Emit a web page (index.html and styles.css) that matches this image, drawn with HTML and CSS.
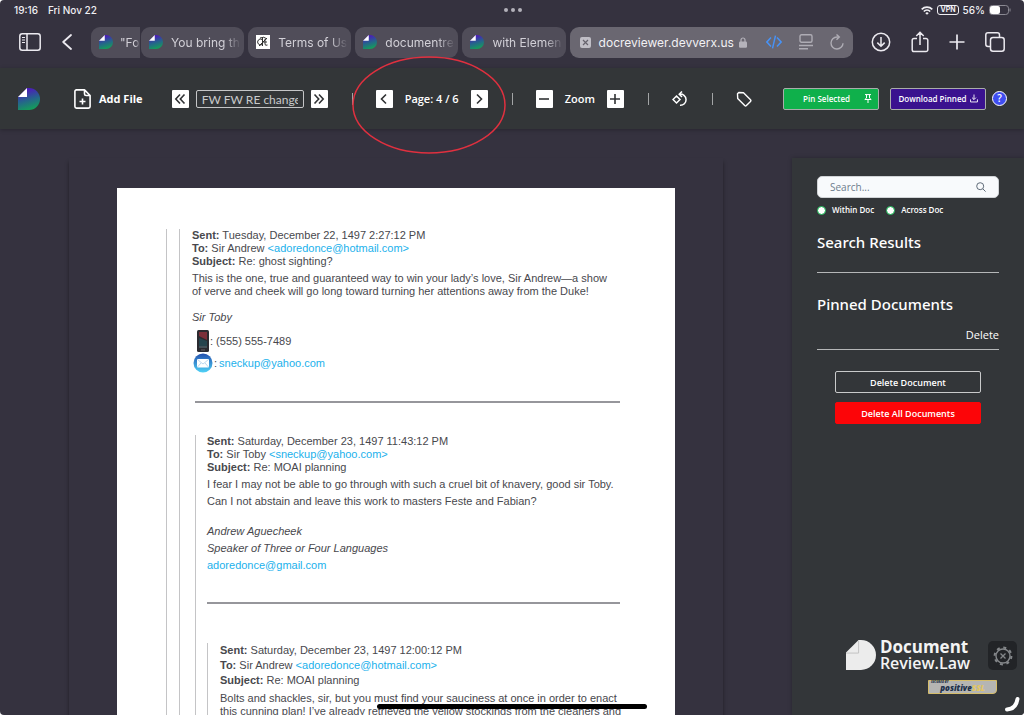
FILE: index.html
```html
<!DOCTYPE html>
<html lang="en">
<head>
    <meta charset="UTF-8">
    <meta name="viewport" content="width=device-width, initial-scale=1.0">
    <title>Document Review</title>
    <link rel="stylesheet" href="styles.css">
</head>
<body>
    <!-- Shared shapes -->
    <svg class="defs" width="0" height="0" aria-hidden="true">
        <defs>
            <linearGradient id="leaf" x1="0.35" y1="0" x2="0.65" y2="1">
                <stop offset="0.1" stop-color="#4a1fb8"/>
                <stop offset="0.5" stop-color="#27608f"/>
                <stop offset="1" stop-color="#12a355"/>
            </linearGradient>
            <linearGradient id="mailblue" x1="0" y1="0" x2="0" y2="1">
                <stop offset="0" stop-color="#2450ae"/>
                <stop offset="1" stop-color="#4fd2f7"/>
            </linearGradient>
            <symbol id="logo" viewBox="0 0 22 22">
                <path d="M9 0h2a11 11 0 0 1 0 22H0V9z" fill="url(#leaf)"/>
                <path d="M9 0v9H0z" fill="#fff"/>
            </symbol>
        </defs>
    </svg>

    <div class="status-bar">
        <div class="status-left"><span>19:16</span><span>Fri Nov 22</span></div>
        <div class="dots"><i></i><i></i><i></i></div>
        <div class="status-right">
            <svg width="12" height="9" viewBox="0 0 12 9" fill="none" stroke="#f0eff3" stroke-width="1.7"><path d="M.7 3.3a7.6 7.6 0 0 1 10.6 0M2.8 5.5a4.6 4.6 0 0 1 6.4 0"/><path d="M6 8.8 4.3 7.2a2.4 2.4 0 0 1 3.4 0z" fill="#f0eff3" stroke="none"/></svg>
            <span class="vpn">VPN</span>
            <span>56%</span>
            <svg width="22" height="10" viewBox="0 0 22 10"><rect x=".5" y=".5" width="19" height="9" rx="2.8" fill="none" stroke="#8b8993"/><rect x="1" y="1" width="10" height="8" rx="2" fill="#fff"/><path d="M21 3.5v3" stroke="#8b8993"/></svg>
        </div>
    </div>

    <div class="browser-bar">
        <div class="browser-nav">
            <button class="icon-btn" aria-label="Sidebar"><svg width="22" height="18" viewBox="0 0 22 18" fill="none" stroke="#eceaf0" stroke-width="1.5"><rect x=".8" y=".8" width="20.4" height="16.4" rx="2.5"/><path d="M8 1v16"/><path d="M3 4.5h3M3 7h3M3 9.5h3" stroke-width="1"/></svg></button>
            <button class="icon-btn" aria-label="Back"><svg width="10" height="16" viewBox="0 0 10 16" fill="none" stroke="#eceaf0" stroke-width="1.8" stroke-linecap="round" stroke-linejoin="round"><path d="M9 1 1.2 8 9 15"/></svg></button>
        </div>
        <div class="tabs">
            <a href="#" class="tab tab-under"><svg class="favicon"><use href="#logo"/></svg><span>"Fo</span></a>
            <a href="#" class="tab"><svg class="favicon"><use href="#logo"/></svg><span>You bring th</span></a>
            <a href="#" class="tab"><svg class="favicon" viewBox="0 0 14 14"><path fill="#fff" d="M0 0h14v14H0z"/><path d="M6 4.5a2.8 3 0 1 0 0 5M6.5 3v8M6 7h5M9 4v5q0 2 2.5 1M3 11l8-8M4 3q4-2 7 1" fill="none" stroke="#333" stroke-width="1"/></svg><span>Terms of Us</span></a>
            <a href="#" class="tab"><svg class="favicon"><use href="#logo"/></svg><span>documentre</span></a>
            <a href="#" class="tab"><svg class="favicon"><use href="#logo"/></svg><span>with Elemen</span></a>
            <div class="tab active">
                <svg width="11" height="11" viewBox="0 0 11 11"><rect width="11" height="11" rx="2" fill="#c0bec6"/><path d="M3 3l5 5M8 3 3 8" stroke="#66636d" stroke-width="1.2"/></svg>
                <a href="#" class="address">docreviewer.devverx.us</a>
                <svg width="8" height="11" viewBox="0 0 8 11"><rect y="4.5" width="8" height="6.2" rx="1.2" fill="#b5b3bb"/><path d="M2 5V3a2 2 0 0 1 4 0v2" fill="none" stroke="#b5b3bb" stroke-width="1.2"/></svg>
                <div class="tab-tools">
                    <svg width="16" height="14" viewBox="0 0 16 14" fill="none" stroke="#4792f5" stroke-width="1.5"><path d="M5 2.5.9 7 5 11.5M11 2.5 15.1 7 11 11.5M9.5.6l-3 12.8"/></svg>
                    <svg width="14" height="16" viewBox="0 0 14 16" fill="none" stroke="#aeacb4" stroke-width="1.4"><rect x="1" y=".8" width="12" height="7.5" rx="1.5"/><path d="M0 11.5h14M0 14.8h9"/></svg>
                    <svg width="14" height="16" viewBox="0 0 14 16" fill="none" stroke="#aeacb4" stroke-width="1.4"><path d="M13 9.2a6 6 0 1 1-6-6.2h2"/><path d="M6.5.5 9.3 3 6.5 5.8"/></svg>
                </div>
            </div>
        </div>
        <div class="browser-actions">
            <button class="icon-btn" aria-label="Downloads"><svg width="20" height="20" viewBox="0 0 20 20" fill="none" stroke="#eceaf0" stroke-width="1.5"><circle cx="10" cy="10" r="8.7"/><path d="M10 5v9M6.3 10.6 10 14.2l3.7-3.6"/></svg></button>
            <button class="icon-btn" aria-label="Share"><svg width="18" height="22" viewBox="0 0 18 22" fill="none" stroke="#eceaf0" stroke-width="1.5"><path d="M6 7.5H3A1.8 1.8 0 0 0 1.2 9.3v9.4A1.8 1.8 0 0 0 3 20.5h12a1.8 1.8 0 0 0 1.8-1.8V9.3A1.8 1.8 0 0 0 15 7.5h-3M9 14V1.8M5.3 5 9 1.3 12.7 5"/></svg></button>
            <button class="icon-btn" aria-label="New tab"><svg width="16" height="16" viewBox="0 0 16 16" stroke="#eceaf0" stroke-width="1.7"><path d="M8 .5v15M.5 8h15"/></svg></button>
            <button class="icon-btn" aria-label="All tabs"><svg width="20" height="20" viewBox="0 0 20 20" fill="none" stroke="#eceaf0" stroke-width="1.5"><rect x="5.5" y="5.5" width="13.7" height="13.7" rx="2.5"/><path d="M5 14.5H3A2.2 2.2 0 0 1 .8 12.3V3A2.2 2.2 0 0 1 3 .8h9.3A2.2 2.2 0 0 1 14.5 3v2"/></svg></button>
        </div>
    </div>

    <header class="toolbar">
        <a href="#" class="brand" aria-label="Home"><svg width="22" height="22"><use href="#logo"/></svg></a>
        <button class="add-file">
            <svg width="17" height="20" viewBox="0 0 17 20" fill="none" stroke="#fff" stroke-width="1.6" stroke-linejoin="round"><path d="M10.5.9H2.5A1.6 1.6 0 0 0 .9 2.5v15a1.6 1.6 0 0 0 1.6 1.6h12a1.6 1.6 0 0 0 1.6-1.6V6.5zM10.5.9v4q0 1.6 1.6 1.6h4M8.5 9.5v6M5.5 12.5h6"/></svg>
            Add File
        </button>
        <div class="group doc-nav">
            <button class="square" aria-label="Previous document"><svg width="14" height="14" viewBox="0 0 14 14"><path d="M7 2.5 2.8 7 7 11.5M11.5 2.5 7.3 7l4.2 4.5"/></svg></button>
            <input class="doc-name" type="text" value="FW FW RE change" aria-label="Document name">
            <button class="square" aria-label="Next document"><svg width="14" height="14" viewBox="0 0 14 14"><path d="M2.5 2.5 6.7 7l-4.2 4.5M7 2.5 11.2 7 7 11.5"/></svg></button>
        </div>
        <span class="divider"></span>
        <div class="group page-nav">
            <button class="square" aria-label="Previous page"><svg width="14" height="14" viewBox="0 0 14 14"><path d="M9 2.5 4.5 7 9 11.5"/></svg></button>
            <span>Page: 4 / 6</span>
            <button class="square" aria-label="Next page"><svg width="14" height="14" viewBox="0 0 14 14"><path d="M5 2.5 9.5 7 5 11.5"/></svg></button>
            <svg class="marker" width="154" height="98" viewBox="0 0 154 98"><ellipse cx="77" cy="49" rx="76" ry="48" fill="none" stroke="#e0303f" stroke-width="1.5"/></svg>
        </div>
        <span class="divider"></span>
        <div class="group zoom-nav">
            <button class="square" aria-label="Zoom out"><svg width="14" height="14" viewBox="0 0 14 14"><path d="M2 7h10"/></svg></button>
            <span>Zoom</span>
            <button class="square" aria-label="Zoom in"><svg width="14" height="14" viewBox="0 0 14 14"><path d="M2 7h10M7 2v10"/></svg></button>
        </div>
        <span class="divider"></span>
        <button class="icon-btn" aria-label="Rotate"><svg width="16" height="16" viewBox="0 0 16 16" fill="none" stroke="#fff" stroke-width="1.5"><path d="M4.5 5 8 8.5 4.5 12 1 8.5zM7.5 3.2A5.6 5.6 0 1 1 8 14.3M10 .5 7.2 3.2 10 6"/></svg></button>
        <span class="divider"></span>
        <button class="icon-btn" aria-label="Tag"><svg width="16" height="16" viewBox="0 0 16 16" fill="none" stroke="#fff" stroke-width="1.4" stroke-linejoin="round"><path d="M1.5 2.8 2.8 1.5 7.5 1.7 14.5 8.7Q15.3 9.6 14.5 10.4L10.4 14.5Q9.6 15.3 8.7 14.5L1.7 7.5z"/></svg></button>
        <div class="toolbar-actions">
            <button class="action pin">Pin Selected<svg width="8" height="9" viewBox="0 0 8 9" fill="none" stroke="#fff"><path d="M1 .6h6M2.5.6v3.5L.8 5.5h6.4L5.5 4.1V.6M4 5.5V9"/></svg></button>
            <button class="action download">Download Pinned<svg width="8" height="9" viewBox="0 0 9 9" fill="none" stroke="#fff"><path d="M4.5 0v5.5M2.3 3.5l2.2 2.2 2.2-2.2M.6 5.5v2.9h7.8V5.5"/></svg></button>
            <button class="help" aria-label="Help">?</button>
        </div>
    </header>

    <main class="workspace">
        <section class="viewer">
            <article class="page">
                <div class="thread"><div class="thread">
                    <div class="mail">
                        <p class="head"><b>Sent:</b> Tuesday, December 22, 1497 2:27:12 PM<br>
                        <b>To:</b> Sir Andrew <a href="#">&lt;adoredonce@hotmail.com&gt;</a><br>
                        <b>Subject:</b> Re: ghost sighting?</p>
                        <p class="text">This is the one, true and guaranteed way to win your lady’s love, Sir Andrew—a show<br>
                        of verve and cheek will go long toward turning her attentions away from the Duke!</p>
                        <p class="signature"><i>Sir Toby</i></p>
                        <p class="contact"><svg class="phone" width="12" height="22" viewBox="0 0 12 22"><rect width="12" height="22" rx="1.5" fill="#2b2a30"/><path d="M2 2h8v8L2 6z" fill="#7c2f3a"/><path d="M2 8l8 3v7H2z" fill="#25444e"/><path d="M2 17h8M4 20h4" stroke="#655e65"/></svg>: (555) 555-7489</p>
                        <p class="contact"><svg width="20" height="20" viewBox="0 0 20 20"><circle cx="10" cy="10" r="9.5" fill="url(#mailblue)"/><rect x="4" y="6" width="12" height="8.5" rx="1" fill="#fff"/><path d="M4.5 6.5 10 11l5.5-4.5M4.5 14 8 10M15.5 14 12 10" fill="none" stroke="#a9cdea" stroke-width=".8"/></svg>: <a href="#">sneckup@yahoo.com</a></p>
                    </div>
                    <hr>
                    <div class="thread reply">
                        <div class="mail">
                            <p class="head"><b>Sent:</b> Saturday, December 23, 1497 11:43:12 PM<br>
                            <b>To:</b> Sir Toby <a href="#">&lt;sneckup@yahoo.com&gt;</a><br>
                            <b>Subject:</b> Re: MOAI planning</p>
                            <p class="loose">I fear I may not be able to go through with such a cruel bit of knavery, good sir Toby.<br>
                            Can I not abstain and leave this work to masters Feste and Fabian?</p>
                            <p class="loose signature"><i>Andrew Aguecheek<br>Speaker of Three or Four Languages</i><br>
                            <a href="#">adoredonce@gmail.com</a></p>
                        </div>
                        <hr class="flush">
                        <div class="thread">
                            <p class="head spaced"><b>Sent:</b> Saturday, December 23, 1497 12:00:12 PM<br>
                            <b>To:</b> Sir Andrew <a href="#">&lt;adoredonce@hotmail.com&gt;</a><br>
                            <b>Subject:</b> Re: MOAI planning</p>
                            <p class="text">Bolts and shackles, sir, but you must find your sauciness at once in order to enact<br>
                            this cunning plan! I’ve already retrieved the yellow stockings from the cleaners and</p>
                        </div>
                    </div>
                </div></div>
            </article>
        </section>

        <aside class="sidebar">
            <div class="search">
                <input type="text" placeholder="Search..." aria-label="Search">
                <svg width="10" height="10" viewBox="0 0 10 10" fill="none" stroke="#5f6b78"><circle cx="4.2" cy="4.2" r="3.5"/><path d="M6.8 6.8 9.6 9.6"/></svg>
            </div>
            <div class="scope">
                <label><input type="radio" name="scope">Within Doc</label>
                <label><input type="radio" name="scope">Across Doc</label>
            </div>
            <h2 class="results-title">Search Results</h2>
            <h2 class="pinned-title">Pinned Documents</h2>
            <div class="pinned-head"><a href="#">Delete</a></div>
            <div class="delete-buttons">
                <button>Delete Document</button>
                <button class="danger">Delete All Documents</button>
            </div>
            <footer>
                <div class="footer-logo">
                    <svg width="30" height="30" viewBox="0 0 31 31"><path d="M13 0h2.5a15.5 15.5 0 0 1 0 31H0V13z" fill="#ececec"/><path d="M13 1v12.5H0" fill="none" stroke="#c2c2c2"/></svg>
                    <div class="wordmark"><strong>Document</strong><span>Review.Law</span></div>
                </div>
                <div class="ssl"><small>SECURED BY</small><span>positive<em>SSL</em></span></div>
            </footer>
            <button class="settings" aria-label="Settings"><svg width="20" height="20" viewBox="0 0 20 20" fill="none" stroke="#84878a"><circle cx="10" cy="10" r="7" stroke-width="1.4"/><circle cx="10" cy="10" r="8.4" stroke-width="2" stroke-dasharray="3 3.6"/><path d="M7.5 7.5l5 5M12.5 7.5l-5 5" stroke-width="1.3"/></svg></button>
        </aside>
    </main>

    <div class="home-indicator"></div>
    <svg class="corner" width="17" height="17" viewBox="0 0 17 17"><path d="M3 13.5Q12 13 13.5 3" fill="none" stroke="#fff" stroke-width="4" stroke-linecap="round"/></svg>
</body>
</html>
```
FILE: styles.css
```css
* {
    box-sizing: border-box;
}

html {
    background: #fff;
}

body {
    margin: 0;
    height: 100vh;
    display: flex;
    flex-direction: column;
    overflow: hidden;
    position: relative;
    background: #35323f;
    border-radius: 4px;
    color: #fff;
    font-family: "Open Sans", sans-serif;
    font-size: 11px;
}

button {
    font: inherit;
    color: inherit;
    padding: 0;
    border: 0;
    background: none;
    cursor: pointer;
}

a {
    color: inherit;
    text-decoration: none;
}

svg {
    display: block;
    flex: none;
}

.defs {
    position: absolute;
}

.icon-btn {
    display: flex;
    align-items: center;
    justify-content: center;
}

/* Device status */
.status-bar {
    display: grid;
    grid-template-columns: 1fr auto 1fr;
    align-items: center;
    height: 20px;
    padding: 0 13px 0 14px;
    font-family: Inter, sans-serif;
    font-size: 10px;
    font-weight: 500;
    color: #f0eff3;
}

.status-left {
    display: flex;
    gap: 10px;
}

.status-right {
    display: flex;
    justify-content: flex-end;
    align-items: center;
    gap: 4px;
}

.dots {
    display: flex;
    gap: 3px;
}

.dots i {
    width: 4px;
    height: 4px;
    border-radius: 50%;
    background: #b3b1ba;
}

.vpn {
    border: 1px solid #f0eff3;
    border-radius: 3px;
    padding: 0 2px;
    font-size: 7px;
    line-height: 8px;
    font-weight: 700;
}

/* Browser chrome */
.browser-bar {
    display: flex;
    align-items: center;
    height: 48px;
    padding: 0 19px 4px;
    font-family: Inter, sans-serif;
    font-size: 12px;
}

.browser-nav {
    display: flex;
    align-items: center;
    gap: 21px;
    width: 72px;
}

.tabs {
    flex: 1;
    display: grid;
    grid-template-columns: 46fr 103fr 103fr 103fr 103fr 283fr;
    gap: 4px;
}

.tab {
    display: flex;
    align-items: center;
    gap: 8px;
    min-width: 0;
    height: 31px;
    padding: 0 3px 0 8px;
    border-radius: 9px;
    background: #504d59;
    color: #d2d0d7;
    overflow: hidden;
    white-space: nowrap;
}

.tab > span {
    flex: 1;
    overflow: hidden;
    mask-image: linear-gradient(to right, #000 75%, transparent);
}

.tab-under {
    gap: 7px;
    padding-right: 0;
    margin-right: -3px;
    border-radius: 9px 0 0 9px;
}

.tab.active {
    background: #6a6771;
    color: #f2f1f4;
    padding: 0 9px 0 10px;
}

.favicon {
    width: 14px;
    height: 14px;
}

.active > a + svg {
    margin-left: -3px;
}

.tab-tools {
    display: flex;
    align-items: center;
    gap: 17px;
    margin-left: auto;
}

.browser-actions {
    display: flex;
    align-items: center;
    justify-content: space-between;
    width: 134px;
    margin-left: 18px;
}

/* Application toolbar */
.toolbar {
    display: flex;
    align-items: center;
    height: 61px;
    flex: none;
    padding: 0 17px 0 18px;
    background: #333638;
    box-shadow: 0 1px 4px rgba(0, 0, 0, 0.25);
    font-weight: 600;
    position: relative;
    z-index: 1;
}

.add-file {
    display: flex;
    align-items: center;
    gap: 8px;
    margin-left: 34px;
    font-weight: 700;
    white-space: nowrap;
}

.group {
    display: flex;
    align-items: center;
    gap: 12px;
    position: relative;
    white-space: nowrap;
}

.doc-nav {
    gap: 7px;
    margin-left: 29px;
}

.square {
    display: flex;
    align-items: center;
    justify-content: center;
    width: 17px;
    height: 18px;
    border-radius: 1px;
    background: #fff;
}

.square svg {
    fill: none;
    stroke: #303234;
    stroke-width: 1.6;
}

.doc-name {
    width: 108px;
    height: 18px;
    padding: 2px 5px 0;
    border: 1px solid #c5c6c7;
    border-radius: 2px;
    background: transparent;
    color: #c9cacb;
    font-family: Lato, sans-serif;
    font-size: 12px;
}

.divider {
    width: 1px;
    height: 12px;
    margin: 0 23px 0 24px;
    background: #a3a5a6;
}

.marker {
    position: absolute;
    top: -34px;
    left: -24px;
    pointer-events: none;
}

.toolbar-actions {
    display: flex;
    align-items: center;
    margin-left: auto;
}

.action {
    display: flex;
    align-items: center;
    justify-content: center;
    width: 96px;
    height: 22px;
    margin-right: 11px;
    border: 1px solid #a9adaa;
    border-radius: 2px;
    font-size: 8px;
    white-space: nowrap;
}

.pin {
    gap: 14px;
    justify-content: flex-end;
    padding-right: 6px;
    background: #0fb04b;
}

.download {
    gap: 3px;
    margin-right: 6px;
    background: #3a128f;
}

.help {
    width: 15px;
    height: 15px;
    border: 1px solid #fff;
    border-radius: 50%;
    background: #3f4df0;
    font-size: 10px;
    line-height: 13px;
}

/* Document area */
.workspace {
    flex: 1;
    min-height: 0;
    display: grid;
    grid-template-columns: 654px 232px;
    justify-content: end;
    gap: 69px;
    padding-top: 29px;
}

.viewer {
    min-height: 0;
    overflow: hidden;
    padding: 30px 48px 0;
    box-shadow: 0 4px 4px rgba(0, 0, 0, 0.4);
}

.page {
    height: 100%;
    overflow: hidden;
    padding: 41px 49px 0;
    background: #fff;
    color: #48484d;
    font-family: "Liberation Sans", Arial, sans-serif;
    line-height: 13px;
    white-space: nowrap;
}

.page p {
    margin: 0;
}

.page a {
    color: #1bb1ec;
}

.thread {
    padding-left: 12px;
    border-left: 1px solid #c4c4c6;
    min-height: 600px;
}

.page .head {
    padding-bottom: 4px;
}

.page .reply > .mail .head {
    padding-bottom: 2px;
}

.page .spaced {
    line-height: 15px;
}

.page .signature {
    padding-top: 13px;
}

.page .loose {
    line-height: 17px;
}

.page .contact {
    display: flex;
    align-items: center;
    gap: 1px;
    height: 22px;
    padding-left: 1px;
}

.signature + .contact {
    margin-top: 6px;
}

.phone {
    margin-left: 4px;
}

.contact a {
    margin-left: 1px;
}

.page hr {
    width: 425px;
    height: 0;
    margin: 27px 0 32px 3px;
    border: 0;
    border-top: 2px solid #96969b;
}

.reply {
    margin-left: 3px;
    padding-left: 11px;
}

.page .flush {
    width: 413px;
    margin: 28px 0 39px;
}

/* Sidebar */
.sidebar {
    position: relative;
    display: flex;
    flex-direction: column;
    padding: 18px 25px 21px;
    background: #333639;
    box-shadow: 0 0 4px rgba(0, 0, 0, 0.25);
}

.search {
    display: flex;
    align-items: center;
    height: 22px;
    padding: 0 12px;
    border: 1px solid #d0d3d6;
    border-radius: 5px;
    background: #f8fafc;
}

.search input {
    flex: 1;
    min-width: 0;
    padding: 0;
    border: 0;
    outline: 0;
    background: none;
    font-family: inherit;
    font-size: 10px;
}

.search input::placeholder {
    color: #6d7c8d;
}

.scope {
    display: flex;
    gap: 12px;
    margin-top: 6px;
    font-size: 8px;
    line-height: 12px;
    font-weight: 600;
}

.scope label {
    display: flex;
    align-items: center;
    gap: 6px;
}

.scope input {
    appearance: none;
    width: 9px;
    height: 9px;
    margin: 0;
    border: 1px solid #0fb04b;
    border-radius: 50%;
    background: #fff;
}

.sidebar h2 {
    margin: 0;
    font-family: "Noto Sans", sans-serif;
    font-size: 15px;
    line-height: 20px;
    font-weight: 500;
}

.sidebar .results-title {
    margin-top: 16px;
    padding-bottom: 20px;
    border-bottom: 1px solid #b5b7b8;
}

.sidebar .pinned-title {
    margin-top: 21px;
}

.pinned-head {
    padding: 13px 0 6px;
    border-bottom: 1px solid #b5b7b8;
    font-size: 11px;
    line-height: 16px;
    text-align: right;
}

.delete-buttons {
    display: flex;
    flex-direction: column;
    gap: 9px;
    padding: 21px 18px 0;
}

.delete-buttons button {
    height: 22px;
    border: 1px solid #c9cacb;
    border-radius: 2px;
    font-size: 9px;
    font-weight: 600;
}

.delete-buttons .danger {
    border-color: #fc0508;
    background: #fc0508;
}

footer {
    display: flex;
    flex-direction: column;
    align-items: flex-end;
    gap: 8px;
    margin-top: auto;
    padding-right: 2px;
}

.footer-logo {
    display: flex;
    align-items: center;
    gap: 4px;
    margin-right: 27px;
    color: #f4f4f4;
}

.wordmark {
    display: flex;
    flex-direction: column;
    font-size: 16px;
    line-height: 17px;
}

.wordmark strong {
    font-size: 17px;
    font-weight: 700;
}

.wordmark span {
    font-weight: 600;
}

.ssl {
    display: flex;
    flex-direction: column;
    width: 69px;
    height: 14px;
    padding: 0 2px;
    border: 1px solid #d5bd6b;
    border-radius: 0 0 4px 0;
    background: #b5b5b3;
    color: #20304a;
    text-align: center;
    font-size: 8px;
    line-height: 8px;
    font-weight: 800;
    font-style: italic;
}

.ssl small {
    font-size: 3px;
    line-height: 3px;
    text-align: left;
}

.ssl em {
    color: #e2c660;
}

.settings {
    position: absolute;
    right: 7px;
    bottom: 45px;
    display: flex;
    align-items: center;
    justify-content: center;
    width: 29px;
    height: 29px;
    border-radius: 5px;
    background: #222427;
}

/* Device overlays */
.home-indicator {
    position: absolute;
    left: 50%;
    bottom: 6px;
    width: 270px;
    height: 5px;
    margin-left: -135px;
    border-radius: 3px;
    background: #000;
    z-index: 2;
}

.corner {
    position: absolute;
    right: 3px;
    bottom: 2px;
}
```
